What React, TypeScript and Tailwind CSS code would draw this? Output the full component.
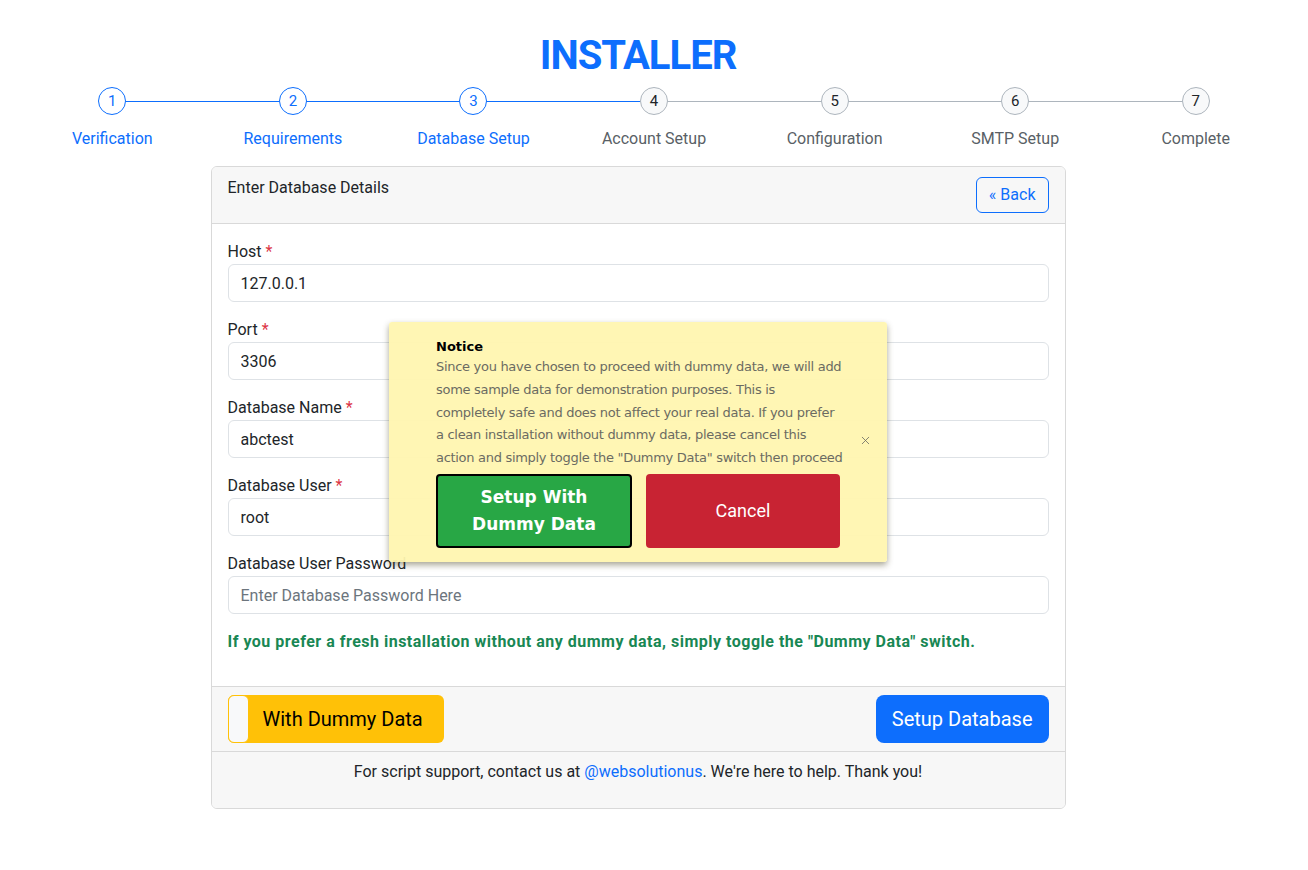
import { X } from "lucide-react";

const steps = [
  { n: 1, label: "Verification", done: true },
  { n: 2, label: "Requirements", done: true },
  { n: 3, label: "Database Setup", done: true },
  { n: 4, label: "Account Setup", done: false },
  { n: 5, label: "Configuration", done: false },
  { n: 6, label: "SMTP Setup", done: false },
  { n: 7, label: "Complete", done: false },
];

const fields = [
  { label: "Host", value: "127.0.0.1", required: true },
  { label: "Port", value: "3306", required: true },
  { label: "Database Name", value: "abctest", required: true },
  { label: "Database User", value: "root", required: true },
  { label: "Database User Password", value: "", required: false },
];

function Stepper() {
  return (
    <div className="flex px-[22px] mt-[7px]">
      {steps.map((s, i) => (
        <div key={s.n} className="relative flex-1 flex flex-col items-center">
          {i < steps.length - 1 && (
            <div
              className={
                "absolute top-[14px] left-1/2 w-full h-px " +
                (s.done ? "bg-[#0d6efd]" : "bg-[#adb5bd]")
              }
            />
          )}
          <div
            className={
              "relative z-10 w-[28px] h-[28px] rounded-full border flex items-center justify-center text-[15px] " +
              (s.done
                ? "border-[#0d6efd] bg-white text-[#0d6efd]"
                : "border-[#adb5bd] bg-[#f8f9fa] text-[#212529]")
            }
          >
            {s.n}
          </div>
          <div
            className={
              "mt-[12px] text-[16px] leading-6 " +
              (s.done ? "text-[#0d6efd]" : "text-[#595f66]")
            }
          >
            {s.label}
          </div>
        </div>
      ))}
    </div>
  );
}

function Notice() {
  return (
    <div className="absolute left-[389px] top-[322px] w-[498px] h-[240px] bg-[#fff6b0]/95 rounded-[3px] shadow-[0_3px_6px_rgba(60,55,20,0.45)] pl-[47px] pr-[42px] pt-[16px] font-['DejaVu_Sans',Verdana,sans-serif]">
      <div className="text-[13px] leading-[18px] font-bold text-black">Notice</div>
      <p className="text-[13px] leading-[22.75px] tracking-[-0.3px] text-[#6b6b62]">
        Since you have chosen to proceed with dummy data, we will add some sample data for
        demonstration purposes. This is completely safe and does not affect your real data. If
        you prefer a clean installation without dummy data, please cancel this action and simply
        toggle the "Dummy Data" switch then proceed
      </p>
      <div className="flex gap-[14px] mt-[4px]">
        <button className="w-[196px] h-[74px] bg-[#28a745] border-2 border-black rounded-[4px] text-white font-bold text-[17px] leading-[27px]">
          Setup With
          <br />
          Dummy Data
        </button>
        <button className="w-[194px] h-[74px] bg-[#c82333] rounded-[4px] text-white text-[18px] font-['Segoe_UI',Roboto,sans-serif]">
          Cancel
        </button>
      </div>
      <button className="absolute right-[15px] top-[112px] text-[#6b6b62]">
        <X size={13} strokeWidth={1.5} />
      </button>
    </div>
  );
}

export default function App() {
  return (
    <div className="relative min-h-[870px] bg-white font-['Segoe_UI',Roboto,sans-serif] text-[#212529]">
      <div className="w-[1276px] pt-[32px]">
        <h1 className="text-center text-[40px] leading-[48px] font-bold tracking-[-1px] text-[#0d6efd]">
          INSTALLER
        </h1>
      </div>
      <Stepper />
      <div className="w-[1276px] mt-[15px]">
        <div className="mx-auto w-[855px] border border-[#d9d9d9] rounded-md overflow-hidden">
          <div className="flex items-start justify-between bg-[#f7f7f7] border-b border-[#d9d9d9] px-4 pt-[9px] pb-[10px]">
            <span className="text-[16px] leading-6">Enter Database Details</span>
            <button className="mt-px h-[36px] px-3 border border-[#0d6efd] rounded-md text-[#0d6efd] text-[16px]">
              « Back
            </button>
          </div>
          <div className="px-4 pt-4 pb-4">
            {fields.map((f) => (
              <div key={f.label} className="mb-4">
                <label className="block text-[16px] leading-6">
                  {f.label}
                  {f.required && <span className="text-[#dc3545]"> *</span>}
                </label>
                <input
                  readOnly
                  value={f.value}
                  placeholder="Enter Database Password Here"
                  className="block w-full h-[38px] px-3 border border-[#dee2e6] rounded-md text-[16px] text-[#212529] placeholder:text-[#6c757d] outline-none"
                />
              </div>
            ))}
            <p className="mb-4 text-[16px] leading-6 font-bold tracking-[0.5px] text-[#198754]">
              If you prefer a fresh installation without any dummy data, simply toggle the "Dummy
              Data" switch.
            </p>
          </div>
          <div className="flex items-center justify-between bg-[#f7f7f7] border-t border-[#d9d9d9] px-4 py-2">
            <div className="flex items-center w-[216px] h-[48px] bg-[#ffc107] rounded-md">
              <div className="w-[21px] h-[48px] bg-[#f8f9fa] border border-[#ffc107] rounded-md" />
              <span className="ml-[14px] text-[20px] text-black">With Dummy Data</span>
            </div>
            <button className="h-[48px] px-4 bg-[#0d6efd] rounded-lg text-white text-[20px]">
              Setup Database
            </button>
          </div>
          <div className="bg-[#f7f7f7] border-t border-[#d9d9d9] pt-2 pb-6 text-center text-[16px] leading-6">
            For script support, contact us at{" "}
            <span className="text-[#0d6efd]">@websolutionus</span>. We're here to help. Thank you!
          </div>
        </div>
      </div>
      <Notice />
    </div>
  );
}
